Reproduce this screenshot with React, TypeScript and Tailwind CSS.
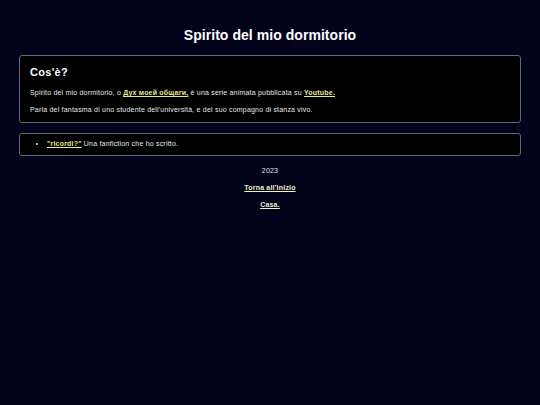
import React from "react";

const linkCls = "font-bold text-[#e8e88c] underline underline-offset-1";
const footLinkCls = "font-bold text-[#f0f0c8] underline underline-offset-1";

export default function App() {
  return (
    <main
      className="min-h-[405px] w-full bg-[#02021a] text-[#e6e6e6] pt-[26px] pb-4"
      style={{ fontFamily: '"Liberation Sans", Arial, sans-serif' }}
    >
      {/* Header */}
      <h1 className="text-center text-[14px] font-bold tracking-[0.05px] text-white leading-[18px]">
        Spirito del mio dormitorio
      </h1>

      <div className="mx-[19px] mt-[11px] space-y-[10px]">
        {/* About */}
        <section className="bg-black border border-[#5d6b78] rounded-[3px] px-[10px] pt-[9px] pb-[7px]">
          <h2 className="text-[11px] font-bold tracking-[0.3px] text-white leading-[14px]">Cos'è?</h2>
          <p className="mt-[9px] text-[7px] tracking-[0.2px] leading-[10px]">
            Spirito del mio dormitorio, o <a className={linkCls}>Дух моей общаги,</a> è una serie animata pubblicata su{" "}
            <a className={linkCls}>Youtube.</a>
          </p>
          <p className="mt-[7px] text-[7px] tracking-[0.2px] leading-[10px]">
            Parla del fantasma di uno studente dell'università, e del suo compagno di stanza vivo.
          </p>
        </section>

        {/* Links */}
        <section className="bg-black border border-[#5d6b78] rounded-[3px] px-[10px] pt-[5px] pb-[6px]">
          <ul className="list-disc pl-[17px] text-[7px] tracking-[0.2px] leading-[10px]">
            <li>
              <a className={linkCls}>"ricordi?"</a> Una fanfiction che ho scritto.
            </li>
          </ul>
        </section>
      </div>

      {/* Footer */}
      <footer className="mt-[10px] flex flex-col items-center gap-[7px] text-[7px] tracking-[0.2px] leading-[10px]">
        <span>2023</span>
        <a className={footLinkCls}>Torna all'inizio</a>
        <a className={footLinkCls}>Casa.</a>
      </footer>
    </main>
  );
}
